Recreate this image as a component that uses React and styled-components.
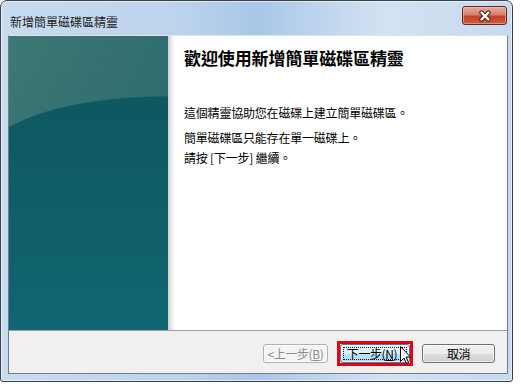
import React from 'react';
import styled, { createGlobalStyle } from 'styled-components';

const GlobalStyle = createGlobalStyle`
  * {
    margin: 0;
    padding: 0;
    box-sizing: border-box;
  }

  html, body {
    background: #ffffff;
    font-family: "Noto Sans CJK TC", "Noto Sans", sans-serif;
  }
`;

const CJK = `"Noto Sans CJK TC", "Noto Sans", sans-serif`;

const WizardPage = () => {
  return (
    <>
      <GlobalStyle />
      <Window>
        <TitleBar>
          <Title>新增簡單磁碟區精靈</Title>
          <CloseButton>
            <svg width="16" height="12" viewBox="0 0 16 12">
              <path d="M4.5 2.5 L11.5 9.5 M11.5 2.5 L4.5 9.5" stroke="#4a2018" strokeWidth="4.4" strokeLinecap="round" />
              <path d="M4.5 2.5 L11.5 9.5 M11.5 2.5 L4.5 9.5" stroke="#ffffff" strokeWidth="2.4" strokeLinecap="round" />
            </svg>
          </CloseButton>
        </TitleBar>
        <Client>
          <Main>
            <SidePanel>
              <svg width="159" height="294" viewBox="0 0 159 294" preserveAspectRatio="none">
                <defs>
                  <linearGradient id="topGlow" x1="0" y1="0" x2="1" y2="1">
                    <stop offset="0" stopColor="#3e7876" />
                    <stop offset="1" stopColor="#24646b" />
                  </linearGradient>
                  <linearGradient id="deepTeal" x1="0" y1="0" x2="0" y2="1">
                    <stop offset="0" stopColor="#0e5860" />
                    <stop offset="0.5" stopColor="#0f5e68" />
                    <stop offset="1" stopColor="#106672" />
                  </linearGradient>
                </defs>
                <rect x="0" y="0" width="159" height="294" fill="url(#topGlow)" />
                <path d="M0 91 C 35 72, 85 61, 159 60 L159 294 L0 294 Z" fill="url(#deepTeal)" />
                <path d="M0 91 C 35 72, 85 61, 159 60" stroke="#2c6b70" strokeWidth="1" fill="none" opacity="0.6" />
              </svg>
            </SidePanel>
            <Shade />
            <Content>
              <Heading>歡迎使用新增簡單磁碟區精靈</Heading>
              <Paragraph $top={36}>這個精靈協助您在磁碟上建立簡單磁碟區。</Paragraph>
              <Paragraph $top={9}>簡單磁碟區只能存在單一磁碟上。</Paragraph>
              <Paragraph $top={4}>請按 [下一步] 繼續。</Paragraph>
            </Content>
          </Main>
          <Footer>
            <Button $variant="disabled" disabled>
              &lt;上一步(<u>B</u>)
            </Button>
            <Highlight>
              <Button $variant="hover">
                下一步(<u>N</u>)
                <Cursor width="12" height="19" viewBox="0 0 12 19">
                  <path d="M0.5 0.5 L0.5 15.5 L4 12 L6.5 17.5 L8.5 16.5 L6 11 L10.5 11 Z" fill="#ffffff" stroke="#000000" strokeWidth="1" strokeLinejoin="round" />
                </Cursor>
              </Button>
            </Highlight>
            <Button>取消</Button>
          </Footer>
        </Client>
      </Window>
    </>
  );
};

// Outer aero frame
const Window = styled.div`
  width: 513px;
  height: 382px;
  display: flex;
  flex-direction: column;
  border: 1px solid #3b4148;
  border-radius: 7px 7px 3px 3px;
  padding: 0 4px 7px 7px;
  background: linear-gradient(to right, #c9dbef 0%, #bcd3ec 35%, #a9c7e8 50%, #d3e2f3 75%, #c6d9ee 100%);
  box-shadow: inset 0 0 0 1px rgba(255, 255, 255, 0.55);
`;

const TitleBar = styled.div`
  height: 35px;
  display: flex;
  align-items: flex-start;
  justify-content: space-between;
`;

const Title = styled.div`
  font-family: ${CJK};
  font-size: 12px;
  color: #1c1c1c;
  margin-top: 13px;
  margin-left: 2px;
  line-height: 16px;
`;

const CloseButton = styled.div`
  width: 45px;
  height: 19px;
  margin-top: 5px;
  margin-right: 1px;
  display: flex;
  align-items: center;
  justify-content: center;
  border: 1px solid #5b2a22;
  border-radius: 3px;
  background: linear-gradient(to bottom, #e7aa9e 0%, #d7806f 45%, #c2422c 55%, #cf5a40 100%);
  box-shadow: inset 0 0 0 1px rgba(255, 210, 200, 0.45);
`;

const Client = styled.div`
  flex: 1;
  display: flex;
  flex-direction: column;
  border: 1px solid #6f7c8a;
  border-top-color: #d9e4f0;
  background: #ffffff;
`;

const Main = styled.div`
  flex: 1;
  display: flex;
`;

const SidePanel = styled.div`
  width: 159px;
  display: flex;
  svg {
    display: block;
    width: 100%;
    height: 100%;
  }
`;

const Shade = styled.div`
  width: 7px;
  background: linear-gradient(to right, #cfcfcf, #ececec 50%, #ffffff);
`;

const Content = styled.div`
  flex: 1;
  padding: 11px 0 0 9px;
  color: #000000;
`;

const Heading = styled.h1`
  font-family: ${CJK};
  font-size: 17px;
  font-weight: 700;
  line-height: 22px;
  letter-spacing: -0.1px;
`;

const Paragraph = styled.p`
  font-family: ${CJK};
  font-size: 12px;
  line-height: 16px;
  margin-top: ${(p) => p.$top}px;
  letter-spacing: -0.2px;
`;

const Footer = styled.div`
  height: 43px;
  display: flex;
  align-items: center;
  justify-content: flex-end;
  gap: 9px;
  padding: 3px 12px 0 0;
  border-top: 1px solid #a0a0a0;
  background: #f0f0f0;
`;

const Highlight = styled.div`
  display: flex;
  border: 3px solid #e8000b;
`;

const Button = styled.button`
  position: relative;
  height: 19px;
  width: ${(p) => (p.$variant === 'hover' ? 70 : p.$variant === 'disabled' ? 65 : 73)}px;
  font-family: ${CJK};
  font-size: 12px;
  line-height: 15px;
  letter-spacing: -0.4px;
  padding-right: ${(p) => (p.$variant === 'hover' ? 6 : 0)}px;
  display: flex;
  align-items: center;
  justify-content: center;
  border-radius: 3px;
  border: 1px solid ${(p) => (p.$variant === 'hover' ? '#3c7fb1' : p.$variant === 'disabled' ? '#adb2b5' : '#707070')};
  color: ${(p) => (p.$variant === 'disabled' ? '#8d8d8d' : '#000000')};
  background: ${(p) =>
    p.$variant === 'hover'
      ? 'linear-gradient(to bottom, #eaf6fd 0%, #d9f0fc 50%, #bee6fd 51%, #a7d9f5 100%)'
      : p.$variant === 'disabled'
      ? '#f4f4f4'
      : 'linear-gradient(to bottom, #f2f2f2 0%, #ebebeb 50%, #dddddd 51%, #cfcfcf 100%)'};
  box-shadow: inset 0 0 0 1px rgba(255, 255, 255, 0.7);

  u {
    text-decoration: underline;
  }

  ${(p) =>
    p.$variant === 'hover' &&
    `
    &::after {
      content: '';
      position: absolute;
      inset: 2px;
      border: 1px dotted #1a1a1a;
    }
  `}
`;

const Cursor = styled.svg`
  position: absolute;
  left: 59px;
  top: 1px;
  z-index: 2;
`;

export default WizardPage;
